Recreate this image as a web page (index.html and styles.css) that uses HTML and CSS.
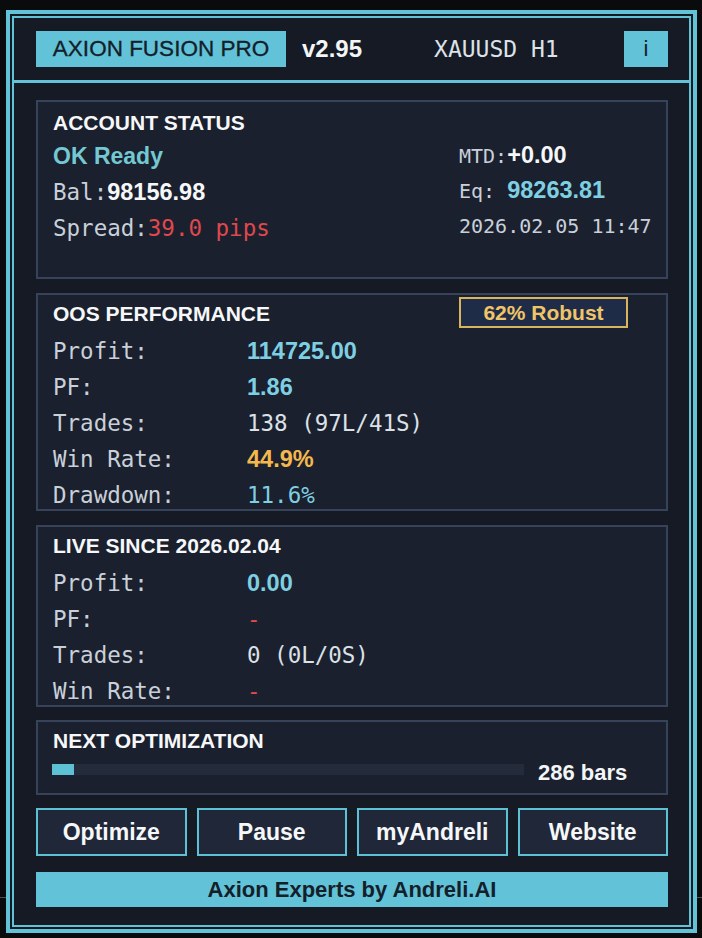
FILE: index.html
```html
<!DOCTYPE html>
<html lang="en">
<head>
    <meta charset="UTF-8">
    <meta name="viewport" content="width=device-width, initial-scale=1.0">
    <title>Axion Fusion Pro</title>
    <link rel="stylesheet" href="styles.css">
</head>
<body>
<div class="frame">
    <div class="panel">
        <header class="head">
            <div class="brand">AXION FUSION PRO</div>
            <div class="ver">v2.95</div>
            <div class="sym">XAUUSD H1</div>
            <div class="info">i</div>
        </header>

        <main class="content">
            <section class="box box-account">
                <div class="cols">
                    <div class="col-left">
                        <div class="box-title">ACCOUNT STATUS</div>
                        <div class="row"><span class="ok">OK Ready</span></div>
                        <div class="row"><span class="lbl">Bal:</span><span class="num white">98156.98</span></div>
                        <div class="row"><span class="lbl">Spread:</span><span class="mono red">39.0 pips</span></div>
                    </div>
                    <div class="col-right">
                        <div class="row-sm"><span class="lbl-sm">MTD:</span><span class="num white">+0.00</span></div>
                        <div class="row-sm"><span class="lbl-sm">Eq: </span><span class="num cyan">98263.81</span></div>
                        <div class="row-sm"><span class="lbl-sm">2026.02.05 11:47</span></div>
                    </div>
                </div>
            </section>

            <section class="box box-oos">
                <div class="title-row">
                    <div class="box-title title-wide">OOS PERFORMANCE</div>
                    <div class="badge">62% Robust</div>
                </div>
                <div class="stats">
                    <span class="lbl">Profit:</span><span class="num cyan">114725.00</span>
                    <span class="lbl">PF:</span><span class="num cyan">1.86</span>
                    <span class="lbl">Trades:</span><span class="mono light">138 (97L/41S)</span>
                    <span class="lbl">Win Rate:</span><span class="num orange">44.9%</span>
                    <span class="lbl">Drawdown:</span><span class="mono cyan">11.6%</span>
                </div>
            </section>

            <section class="box box-live">
                <div class="title-row">
                    <div class="box-title">LIVE SINCE 2026.02.04</div>
                </div>
                <div class="stats">
                    <span class="lbl">Profit:</span><span class="num cyan">0.00</span>
                    <span class="lbl">PF:</span><span class="mono red">-</span>
                    <span class="lbl">Trades:</span><span class="mono light">0 (0L/0S)</span>
                    <span class="lbl">Win Rate:</span><span class="mono red">-</span>
                </div>
            </section>

            <section class="box box-next">
                <div class="box-title">NEXT OPTIMIZATION</div>
                <div class="bar-row">
                    <div class="track"><div class="fill" style="width: 22px;"></div></div>
                    <div class="bars">286 bars</div>
                </div>
            </section>

            <div class="buttons">
                <button class="btn">Optimize</button>
                <button class="btn">Pause</button>
                <button class="btn">myAndreli</button>
                <button class="btn">Website</button>
            </div>

            <div class="footer">Axion Experts by Andreli.AI</div>
        </main>
    </div>
</div>
</body>
</html>
```

FILE: styles.css
```css
body {
    margin: 0;
    height: 938px;
    background-color: #0a0b0d;
    /* chart grid line behind the panel */
    background-image: linear-gradient(#4a4e55, #4a4e55);
    background-size: 100% 1px;
    background-position: 0 897px;
    background-repeat: no-repeat;
    font-family: "Liberation Sans", Arial, sans-serif;
    color: #f4f5f7;
}

.frame {
    margin: 10px 0 0 6px;
    width: 691px;
    height: 923px;
    box-sizing: border-box;
    border: 4px solid #62c2d8;
    padding: 2px;
    background: #141922;
}

.panel {
    height: 100%;
    box-sizing: border-box;
    border: 2px solid #62c2d8;
    background: #151a24;
}

/* header */
.head {
    display: flex;
    align-items: center;
    height: 62px;
    padding: 0 21px 0 22px;
    border-bottom: 3px solid #62c2d8;
}

.brand {
    width: 250px;
    height: 36px;
    line-height: 36px;
    text-align: center;
    background: #62c2d8;
    color: #142029;
    font-size: 22.5px;
    -webkit-text-stroke: 0.3px #142029;
}

.ver {
    margin-left: 16px;
    font-size: 24px;
    font-weight: bold;
}

.sym {
    margin-left: 72px;
    font-family: "DejaVu Sans Mono", "Liberation Mono", monospace;
    font-size: 23px;
    color: #dde2e9;
    white-space: pre;
}

.info {
    margin-left: auto;
    width: 44px;
    height: 36px;
    line-height: 36px;
    text-align: center;
    background: #62c2d8;
    color: #142029;
    font-size: 22px;
}

/* content */
.content {
    padding: 17px 21px 0 22px;
}

.box {
    box-sizing: border-box;
    border: 2px solid #36435a;
    background: #1a202d;
    padding: 6px 0 0 15px;
    margin-bottom: 14px;
}

.box-account {
    height: 179px;
    padding-top: 8px;
}

.box-oos {
    height: 218px;
}

.box-live {
    height: 182px;
    margin-bottom: 13px;
}

.box-next {
    height: 75px;
    margin-bottom: 13px;
}

.box-title {
    height: 26px;
    line-height: 26px;
    font-size: 21px;
    font-weight: bold;
    color: #f6f7f9;
}

.cols {
    display: flex;
}

.col-left {
    width: 406px;
}

.col-left .box-title {
    margin-bottom: 2px;
}

.col-right {
    padding-top: 28px;
}

.row {
    height: 36px;
    display: flex;
    align-items: center;
}

.row-sm {
    height: 35px;
    display: flex;
    align-items: center;
}

.lbl,
.mono {
    font-family: "DejaVu Sans Mono", "Liberation Mono", monospace;
    font-size: 22.5px;
    white-space: pre;
}

.lbl {
    color: #c9d0da;
}

.lbl-sm {
    font-family: "DejaVu Sans Mono", "Liberation Mono", monospace;
    font-size: 20px;
    color: #c9d0da;
    white-space: pre;
}

.num {
    font-size: 23.5px;
    font-weight: bold;
}

.ok {
    font-size: 23px;
    font-weight: bold;
    color: #74c8d2;
}

.white { color: #f6f7f9; }
.cyan { color: #7fcfe3; }
.red { color: #e0484e; }
.orange { color: #f4b94e; }
.light { color: #dce1e8; }

.title-row {
    display: flex;
    align-items: center;
    height: 26px;
    margin-bottom: 6px;
}

.title-wide {
    width: 406px;
}

.badge {
    box-sizing: border-box;
    width: 169px;
    height: 31px;
    line-height: 27px;
    margin-top: -4px;
    text-align: center;
    border: 2px solid #d8b45d;
    background: #1f2c47;
    color: #f0c469;
    font-size: 21px;
    font-weight: bold;
}

.stats {
    display: grid;
    grid-template-columns: 194px 1fr;
    grid-auto-rows: 36px;
    align-items: center;
}

/* progress */
.bar-row {
    display: flex;
    align-items: center;
    height: 30px;
}

.track {
    width: 472px;
    height: 11px;
    margin-left: -1px;
    background: #242b3a;
}

.fill {
    height: 100%;
    background: #5ec0d5;
}

.bars {
    align-self: flex-end;
    margin-left: 14px;
    line-height: 22px;
    font-size: 22px;
    font-weight: bold;
}

/* buttons */
.buttons {
    display: grid;
    grid-template-columns: repeat(4, 1fr);
    gap: 10px;
}

.btn {
    height: 48px;
    border: 2px solid #5ec0d5;
    background: #1f2738;
    color: #f6f7f9;
    font-family: "Liberation Sans", Arial, sans-serif;
    font-size: 23px;
    font-weight: bold;
    padding: 0;
    cursor: pointer;
}

.btn:hover {
    background: #283248;
}

.footer {
    margin-top: 16px;
    height: 35px;
    line-height: 35px;
    text-align: center;
    background: #62c2d8;
    color: #142029;
    font-size: 22px;
    font-weight: bold;
}
```
